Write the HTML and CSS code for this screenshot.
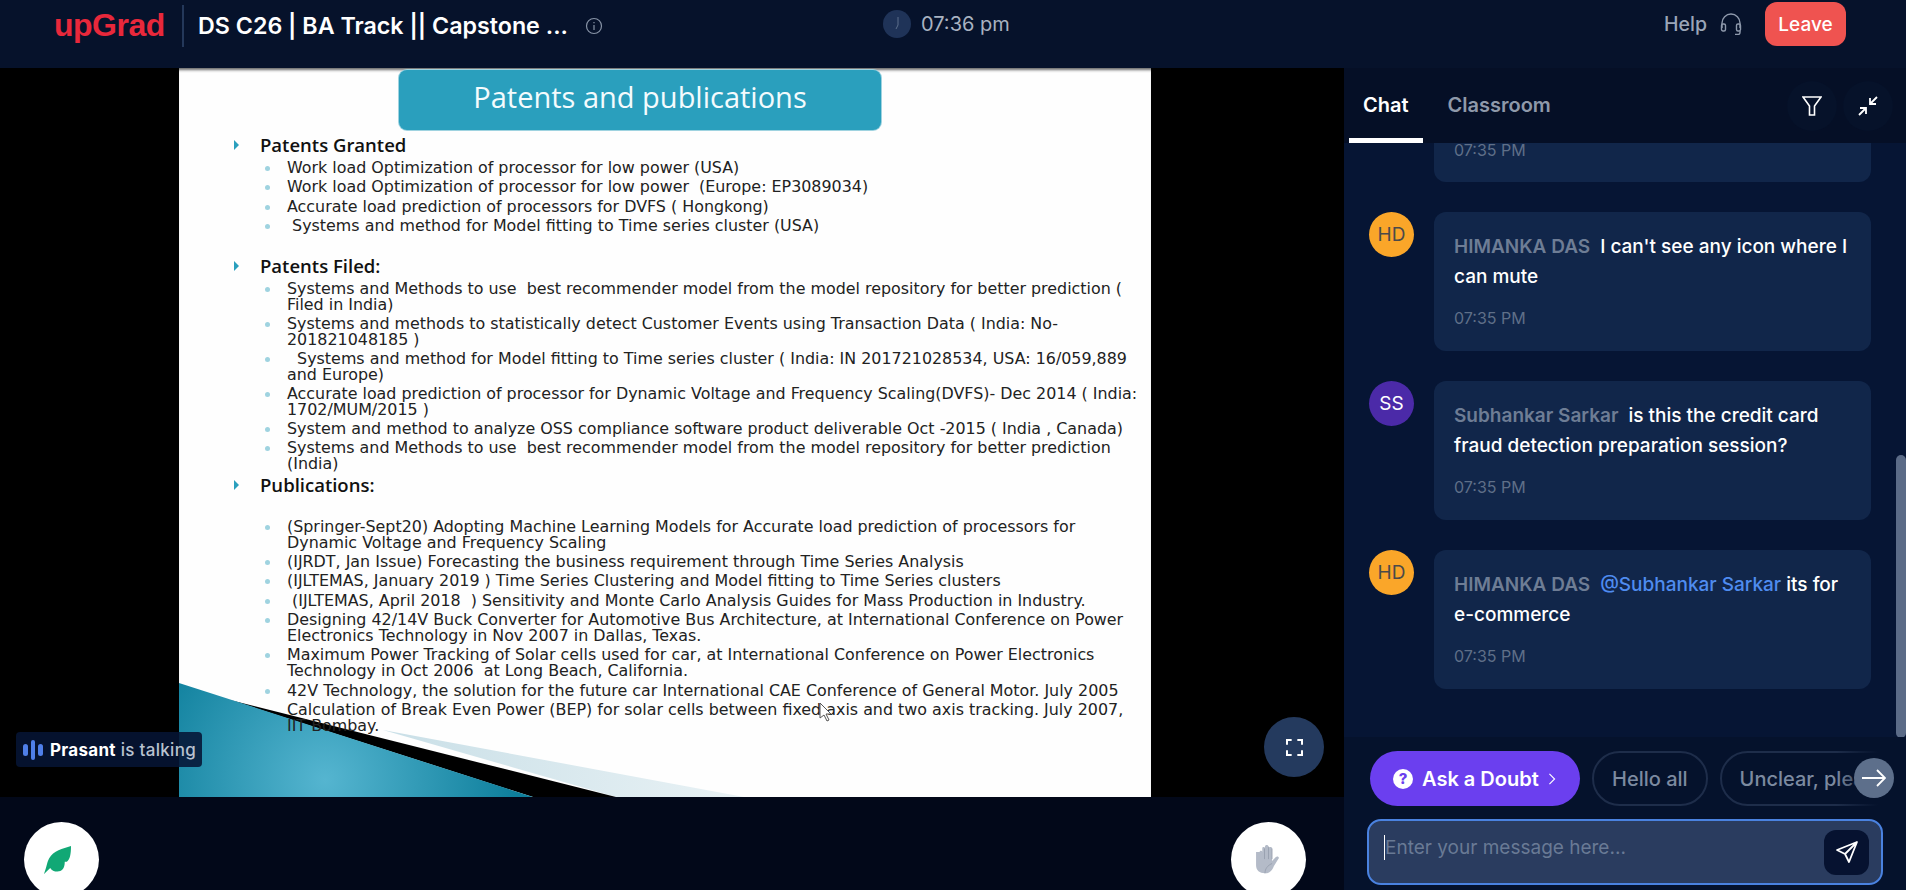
FILE: index.html
```html
<!DOCTYPE html>
<html lang="en">
<head>
    <meta charset="UTF-8">
    <meta name="viewport" content="width=device-width, initial-scale=1.0">
    <title>DS C26 | BA Track || Capstone</title>
    <link rel="stylesheet" href="styles.css">
</head>
<body>
    <header class="topbar">
        <div class="topbar-left">
            <span class="logo">upGrad</span>
            <span class="topbar-divider"></span>
            <h1 class="session-title">DS C26 | BA Track || Capstone ...</h1>
            <svg class="info-icon" viewBox="0 0 18 18" fill="none" stroke="#8793a6" stroke-width="1.2">
                <circle cx="9" cy="9" r="7.5"/>
                <path d="M9 8v5M9 5v1.2"/>
            </svg>
        </div>
        <div class="topbar-clock">
            <svg class="clock-icon" viewBox="0 0 28 28">
                <circle cx="14" cy="14" r="14" fill="#1f3358"/>
                <path d="M15 7v8l-2 4" fill="none" stroke="#5d6f8b" stroke-width="1"/>
            </svg>
            <span>07:36 pm</span>
        </div>
        <div class="topbar-right">
            <span class="help-label">Help</span>
            <svg class="headset-icon" viewBox="0 0 22 22" fill="none" stroke="#8e99ac" stroke-width="1.4">
                <path d="M2 15V10a9 9 0 0 1 18 0v5"/>
                <rect x="1.500" y="11" width="4" height="7" rx="1.500"/>
                <rect x="16.500" y="11" width="4" height="7" rx="1.500"/>
                <path d="M20 18v1.500a2 2 0 0 1-2 2h-3"/>
            </svg>
            <button class="leave-btn">Leave</button>
        </div>
    </header>

    <main class="layout">
        <section class="stage">
            <div class="video">
                <div class="slide">
                    <svg class="slide-art" viewBox="0 0 972 729" preserveAspectRatio="none">
                        <defs>
                            <radialGradient id="tealFill" gradientUnits="userSpaceOnUse" cx="146" cy="712" r="190">
                                <stop offset="0" stop-color="#55b5d0"/>
                                <stop offset="1" stop-color="#0e7f9c"/>
                            </radialGradient>
                            <linearGradient id="paleFill" x1="0" y1="0" x2="1" y2="0">
                                <stop offset="0" stop-color="#c9dfe7"/>
                                <stop offset="1" stop-color="#e9f2f5"/>
                            </linearGradient>
                        </defs>
                        <polygon points="204,662 565,729 437,729" fill="url(#paleFill)"/>
                        <polygon points="51,632 437,729 354,729" fill="#000"/>
                        <polygon points="0,615 354,729 0,729" fill="url(#tealFill)"/>
                    </svg>
                    <div class="slide-heading">Patents and publications</div>
                    <div class="slide-body">
                        <h2 class="slide-h first">Patents Granted</h2>
                        <ul class="slide-list granted-list">
                            <li>Work load Optimization of processor for low power (USA)</li>
                            <li>Work load Optimization of processor for low power&nbsp; (Europe: EP3089034)</li>
                            <li>Accurate load prediction of processors for DVFS ( Hongkong)</li>
                            <li>&nbsp;Systems and method for Model fitting to Time series cluster (USA)</li>
                        </ul>
                        <h2 class="slide-h filed">Patents Filed:</h2>
                        <ul class="slide-list filed-list">
                            <li>Systems and Methods to use&nbsp; best recommender model from the model repository for better prediction (<br>Filed in India)</li>
                            <li>Systems and methods to statistically detect Customer Events using Transaction Data ( India: No-<br>201821048185 )</li>
                            <li>&nbsp; Systems and method for Model fitting to Time series cluster ( India: IN 201721028534, USA: 16/059,889<br>and Europe)</li>
                            <li>Accurate load prediction of processor for Dynamic Voltage and Frequency Scaling(DVFS)- Dec 2014 ( India:<br>1702/MUM/2015 )</li>
                            <li>System and method to analyze OSS compliance software product deliverable Oct -2015 ( India , Canada)</li>
                            <li>Systems and Methods to use&nbsp; best recommender model from the model repository for better prediction<br>(India)</li>
                        </ul>
                        <h2 class="slide-h pubs">Publications:</h2>
                        <ul class="slide-list pubs-list">
                            <li>(Springer-Sept20) Adopting Machine Learning Models for Accurate load prediction of processors for<br>Dynamic Voltage and Frequency Scaling</li>
                            <li>(IJRDT, Jan Issue) Forecasting the business requirement through Time Series Analysis</li>
                            <li>(IJLTEMAS, January 2019 ) Time Series Clustering and Model fitting to Time Series clusters</li>
                            <li>&nbsp;(IJLTEMAS, April 2018&nbsp; ) Sensitivity and Monte Carlo Analysis Guides for Mass Production in Industry.</li>
                            <li>Designing 42/14V Buck Converter for Automotive Bus Architecture, at International Conference on Power<br>Electronics Technology in Nov 2007 in Dallas, Texas.</li>
                            <li>Maximum Power Tracking of Solar cells used for car, at International Conference on Power Electronics<br>Technology in Oct 2006&nbsp; at Long Beach, California.</li>
                            <li>42V Technology, the solution for the future car International CAE Conference of General Motor. July 2005</li>
                            <li class="no-dot">Calculation of Break Even Power (BEP) for solar cells between fixed axis and two axis tracking. July 2007,<br>IIT Bombay.</li>
                        </ul>
                    </div>
                    <svg class="slide-cursor" viewBox="0 0 12 20">
                        <path d="M1 1v15l4-3 3 6 2-1-3-6h5z" fill="#fff" stroke="#555" stroke-width="1"/>
                    </svg>
                </div>
                <div class="talking">
                    <span class="talking-bars"><i></i><i class="tall"></i><i></i></span>
                    <span><strong>Prasant</strong> is talking</span>
                </div>
                <button class="fullscreen-btn">
                    <svg viewBox="0 0 18 18" fill="none" stroke="#fff" stroke-width="2.2">
                        <path d="M1 6V1h5M12 1h5v5M17 12v5h-5M6 17H1v-5"/>
                    </svg>
                </button>
            </div>
            <div class="stage-footer">
                <button class="round-btn">
                    <svg class="leaf-icon" viewBox="0 0 26 23" preserveAspectRatio="none">
                        <path d="M26 0C18 2 9 4 5 10 3 13 3 16 0 23l6-5c1 2 4 3 7 3 4 0 7-2 7-8l2 0c3-2 4-6 4-13z" fill="#11a875"/>
                    </svg>
                </button>
                <button class="round-btn">
                    <svg viewBox="0 0 30 36" width="27" height="32">
                        <path d="M5 9c0-2 3-2 3 0V5c0-2 3-2 3 0V3c0-2.500 4-2.500 4 0v2c0-2 4-2 4 0v14l4-4c2-2 5 0 3 2l-5 8c-2 5-5 8-10 8-6 0-10-3-10-9V9z" fill="#b4bbc8"/>
                        <path d="M10.500 5v12M15 3v14M19 5v12M11 33c0-5 3-9 8-11" fill="none" stroke="#8f98a8" stroke-width=".8"/>
                    </svg>
                </button>
            </div>
        </section>

        <aside class="sidebar">
            <div class="tabs">
                <span class="tab active">Chat</span>
                <span class="tab">Classroom</span>
                <div class="tab-tools">
                    <button class="tool-btn">
                        <svg viewBox="0 0 20 20" fill="none" stroke="#fff" stroke-width="1.6">
                            <path d="M1 1h18l-6.500 9v9h-5v-9z"/>
                        </svg>
                    </button>
                    <button class="tool-btn">
                        <svg viewBox="0 0 20 20" fill="none" stroke="#fff" stroke-width="1.8">
                            <path d="M19 1l-7 7M12 2v6h6M1 19l7-7M8 18v-6H2"/>
                        </svg>
                    </button>
                </div>
            </div>

            <div class="messages">
                <div class="msg">
                    <span class="avatar-gap"></span>
                    <div class="bubble cut"><div class="msg-time">07:35 PM</div></div>
                </div>
                <div class="msg">
                    <span class="avatar orange">HD</span>
                    <div class="bubble">
                        <p><span class="sender">HIMANKA DAS</span>I can't see any icon where I can mute</p>
                        <div class="msg-time">07:35 PM</div>
                    </div>
                </div>
                <div class="msg">
                    <span class="avatar purple">SS</span>
                    <div class="bubble">
                        <p><span class="sender">Subhankar Sarkar</span>is this the credit card fraud detection preparation session?</p>
                        <div class="msg-time">07:35 PM</div>
                    </div>
                </div>
                <div class="msg">
                    <span class="avatar orange">HD</span>
                    <div class="bubble">
                        <p><span class="sender">HIMANKA DAS</span><span class="mention">@Subhankar Sarkar</span> its for <span class="nowrap">e-commerce</span></p>
                        <div class="msg-time">07:35 PM</div>
                    </div>
                </div>
                <span class="scroll-thumb"></span>
            </div>

            <div class="composer">
                <div class="chips">
                    <button class="ask-btn">
                        <svg viewBox="0 0 20 20" width="20" height="20">
                            <circle cx="10" cy="10" r="10" fill="#fff"/>
                            <text x="10" y="15" text-anchor="middle" class="ask-mark">?</text>
                        </svg>
                        Ask a Doubt
                        <svg viewBox="0 0 8 14" width="8" height="12" fill="none" stroke="#fff" stroke-width="1.3">
                            <path d="M1 1l6 6-6 6"/>
                        </svg>
                    </button>
                    <button class="chip">Hello all</button>
                    <button class="chip">Unclear, please repeat</button>
                    <button class="chip-next">
                        <svg viewBox="0 0 24 18" width="24" height="18" fill="none" stroke="#fff" stroke-width="1.8">
                            <path d="M0 9h23M15 1l8 8-8 8"/>
                        </svg>
                    </button>
                </div>
                <div class="input-box">
                    <span class="placeholder">Enter your message here...</span>
                    <button class="send-btn">
                        <svg viewBox="0 0 24 24" width="24" height="24" fill="none" stroke="#fff" stroke-width="1.8" stroke-linejoin="round">
                            <path d="M22 2L2 10l8 4 4 8zM22 2L10 14"/>
                        </svg>
                    </button>
                </div>
            </div>
        </aside>
    </main>
</body>
</html>
```

FILE: styles.css
```css
* {
    box-sizing: border-box;
}
html, body {
    height: 100%;
}
body {
    margin: 0;
    overflow: hidden;
    background-color: #06122b;
    color: #fff;
    font-family: Inter, "Open Sans", sans-serif;
}
button {
    font-family: inherit;
    border: none;
    cursor: pointer;
}

/* top bar */
.topbar {
    height: 68px;
    display: flex;
    background-color: #06122b;
}
.topbar-left {
    flex: none;
    width: 883px;
    display: flex;
    align-items: center;
    height: 48px;
    padding: 3px 0 0 54px;
}
.logo {
    font-family: "Liberation Sans", Arial, sans-serif;
    font-weight: bold;
    font-size: 32px;
    letter-spacing: -0.5px;
    color: #e8283b;
    width: 128px;
}
.topbar-divider {
    width: 2px;
    height: 42px;
    background-color: #24385a;
    margin-right: 14px;
}
.session-title {
    margin: 0;
    font-size: 23.250px;
    font-weight: 600;
    white-space: nowrap;
}
.info-icon {
    width: 18px;
    height: 18px;
    margin-left: 17px;
}
.topbar-clock {
    display: flex;
    align-items: center;
    gap: 10px;
    height: 48px;
    font-size: 20px;
    color: #a9b2c1;
}
.clock-icon {
    width: 28px;
    height: 28px;
}
.topbar-right {
    margin-left: auto;
    display: flex;
    align-items: center;
    height: 48px;
    padding-right: 60px;
    font-size: 19.500px;
    font-weight: 500;
    color: #9aa5b8;
}
.headset-icon {
    width: 22px;
    height: 22px;
    margin-left: 13px;
    margin-right: 23px;
}
.leave-btn {
    width: 81px;
    height: 44px;
    border-radius: 12px;
    background-color: #ef5350;
    color: #fff;
    font-size: 19px;
    font-weight: 500;
}

.layout {
    display: grid;
    grid-template-columns: 1344px 562px;
    height: 822px;
}

/* video and slide */
.stage {
    display: flex;
    flex-direction: column;
}
.video {
    position: relative;
    height: 729px;
    background-color: #000;
    padding-left: 179px;
    overflow: hidden;
}
.slide {
    position: relative;
    width: 972px;
    height: 729px;
    background-color: #fefefe;
    box-shadow: inset 0 4px 3px -2px #666;
    font-family: "DejaVu Sans", sans-serif;
    color: #222;
}
.slide-art {
    position: absolute;
    left: 0;
    top: 0;
    width: 100%;
    height: 100%;
}
.slide-heading {
    position: relative;
    top: 2px;
    margin-left: 220px;
    width: 482px;
    height: 60px;
    border-radius: 8px;
    background-color: #2a9fbd;
    box-shadow: 0 0 0 1px #9fd3e0;
    color: #f4fbfd;
    font-family: "Open Sans", sans-serif;
    font-size: 29px;
    line-height: 54px;
    text-align: center;
}
.slide-body {
    position: relative;
    padding-left: 108px;
}
.slide-h {
    position: relative;
    margin: 0 0 0 -27px;
    font-family: "Open Sans", sans-serif;
    font-size: 18.500px;
    font-weight: 600;
    line-height: 20px;
    color: #111;
}
.slide-h::before {
    content: "";
    position: absolute;
    left: -26px;
    top: 5px;
    border-left: 5px solid #2a9fbd;
    border-top: 5px solid transparent;
    border-bottom: 5px solid transparent;
}
.slide-h.first {
    margin-top: 7px;
}
.slide-h.filed {
    margin-top: 22px;
}
.slide-h.pubs {
    margin-top: 0.700px;
}
.slide-list {
    list-style: none;
    margin: 0;
    padding: 0;
    font-size: 15.900px;
    line-height: 16px;
    white-space: nowrap;
}
.slide-list li {
    position: relative;
    margin-bottom: 3.300px;
}
.slide-list li::before {
    content: "";
    position: absolute;
    left: -22px;
    top: 6px;
    width: 5px;
    height: 5px;
    border-radius: 50%;
    background-color: #9fd3e0;
}
.slide-list li.no-dot::before {
    display: none;
}
.granted-list {
    margin-top: 5px;
}
.filed-list {
    margin-top: 5.500px;
}
.filed-list li {
    margin-bottom: 2.900px;
}
.pubs-list {
    margin-top: 24px;
}
.slide-cursor {
    position: absolute;
    left: 640px;
    top: 634px;
    width: 12px;
    height: 20px;
}
.talking {
    position: absolute;
    left: 16px;
    top: 664px;
    width: 186px;
    height: 35px;
    display: flex;
    align-items: center;
    gap: 7px;
    padding-left: 7px;
    border-radius: 4px;
    background-color: rgba(6, 21, 52, 0.88);
    font-size: 17px;
    font-weight: 500;
    letter-spacing: 0.3px;
    color: #b9c2d0;
    white-space: nowrap;
}
.talking strong {
    color: #fff;
}
.talking-bars {
    display: flex;
    align-items: center;
    gap: 3px;
}
.talking-bars i {
    display: block;
    width: 5px;
    height: 12px;
    border-radius: 3px;
    background-color: #4f7fe8;
}
.talking-bars i.tall {
    width: 4px;
    height: 20px;
}
.fullscreen-btn {
    position: absolute;
    left: 1264px;
    top: 649px;
    width: 60px;
    height: 60px;
    border-radius: 50%;
    background-color: #243a5e;
    display: flex;
    align-items: center;
    justify-content: center;
}
.fullscreen-btn svg {
    width: 17px;
    height: 17px;
}
.stage-footer {
    flex: 1;
    display: flex;
    justify-content: space-between;
    padding: 25px 38px 0 24px;
    background-color: #020819;
    overflow: hidden;
}
.round-btn {
    width: 75px;
    height: 75px;
    flex: none;
    border-radius: 50%;
    background-color: #fff;
    display: flex;
    align-items: center;
    justify-content: center;
}
.leaf-icon {
    width: 27px;
    height: 28px;
    margin-right: 8px;
}

/* chat column */
.sidebar {
    display: flex;
    flex-direction: column;
    background-color: #061534;
    height: 822px;
}
.tabs {
    height: 75px;
    flex: none;
    display: flex;
    align-items: center;
    padding: 0 13px 0 5px;
    background-color: #050f26;
}
.tab {
    position: relative;
    height: 75px;
    padding: 0 14px;
    margin-right: 11px;
    line-height: 75px;
    font-size: 20px;
    font-weight: 600;
    color: #8f99aa;
}
.tab.active {
    color: #fff;
}
.tab.active::after {
    content: "";
    position: absolute;
    left: 0;
    right: 0;
    bottom: 0;
    height: 5px;
    background-color: #fff;
}
.tab-tools {
    margin-left: auto;
    display: flex;
    gap: 6px;
}
.tool-btn {
    width: 50px;
    height: 50px;
    padding: 0;
    border-radius: 50%;
    background-color: #06122a;
    display: flex;
    align-items: center;
    justify-content: center;
}
.tool-btn svg {
    width: 20px;
    height: 20px;
}
.messages {
    position: relative;
    flex: 1;
    min-height: 0;
    overflow: hidden;
    display: flex;
    flex-direction: column;
    gap: 30px;
    padding: 0 35px 0 25px;
}
.msg {
    display: flex;
    gap: 20px;
}
.avatar, .avatar-gap {
    width: 45px;
    flex: none;
}
.avatar {
    height: 45px;
    border-radius: 50%;
    display: flex;
    align-items: center;
    justify-content: center;
    font-size: 19px;
}
.avatar.orange {
    background-color: #faa629;
    color: #4a4a4a;
}
.avatar.purple {
    background-color: #4b2aa8;
    color: #fff;
}
.bubble {
    flex: 1;
    height: 139px;
    padding: 20px 22px 0 20px;
    border-radius: 12px;
    background-color: #11264a;
    font-size: 19px;
    font-weight: 500;
}
.bubble.cut {
    height: 39px;
    padding-top: 0;
    border-radius: 0 0 12px 12px;
}
.bubble p {
    margin: 0;
    line-height: 30px;
}
.sender {
    color: #6e7d95;
    font-weight: 600;
    margin-right: 10px;
}
.mention {
    color: #4f8cf0;
}
.nowrap {
    white-space: nowrap;
}
.msg-time {
    margin-top: 16px;
    font-size: 16px;
    font-weight: 400;
    line-height: 20px;
    color: #5f6f88;
}
.bubble.cut .msg-time {
    margin-top: 0;
    line-height: 14px;
}
.scroll-thumb {
    position: absolute;
    right: 0;
    top: 312px;
    width: 10px;
    height: 283px;
    border-radius: 5px;
    background-color: #5b6b87;
}
.composer {
    flex: none;
    height: 153px;
    background-color: #05122c;
    padding: 14px 23px 0 23px;
}
.chips {
    position: relative;
    display: flex;
    gap: 12px;
    height: 55px;
    margin-right: -23px;
    overflow: hidden;
    padding-left: 3px;
}
.chips::after {
    content: "";
    position: absolute;
    right: 0;
    top: 0;
    bottom: 0;
    width: 70px;
    background: linear-gradient(to right, rgba(5, 18, 44, 0), #05122c 60%);
}
.ask-btn {
    flex: none;
    width: 210px;
    height: 55px;
    border-radius: 28px;
    background-color: #6b3fef;
    color: #fff;
    font-size: 20px;
    font-weight: 600;
    display: flex;
    align-items: center;
    gap: 9px;
    padding-left: 23px;
}
.ask-mark {
    font-family: Inter, sans-serif;
    font-size: 15px;
    font-weight: 800;
    fill: #6b3fef;
}
.chip {
    flex: none;
    height: 55px;
    padding: 0 18px;
    border-radius: 28px;
    border: 2px solid #1e2d4a;
    background: transparent;
    color: #7c8aa0;
    font-size: 20px;
    font-weight: 500;
}
.chip-next {
    position: absolute;
    z-index: 1;
    left: 487px;
    top: 7px;
    width: 40px;
    height: 40px;
    padding: 0;
    border-radius: 50%;
    background-color: #5d6f8b;
    display: flex;
    align-items: center;
    justify-content: center;
}
.input-box {
    display: flex;
    align-items: center;
    justify-content: space-between;
    height: 66px;
    margin-top: 13px;
    padding: 0 12px 0 15px;
    border: 2px solid #4a82e0;
    border-radius: 14px;
    background-color: #2a3c5f;
}
.placeholder {
    border-left: 1px solid #fff;
    margin-bottom: 10px;
    font-size: 19px;
    line-height: 25px;
    color: #697a95;
}
.send-btn {
    width: 45px;
    height: 45px;
    padding: 0;
    border-radius: 12px;
    background-color: #061230;
    display: flex;
    align-items: center;
    justify-content: center;
}
```
